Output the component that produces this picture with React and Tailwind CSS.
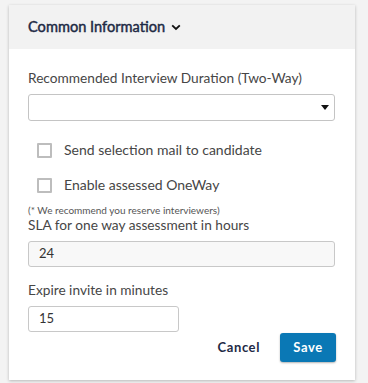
export default function App() {
  const font = { fontFamily: 'Lato, "Noto Sans", sans-serif' };
  return (
    <div className="min-h-[383px] w-[368px] bg-[#f3f3f3] pt-[5px] pl-[9px]" style={font}>
      <div className="flex h-[375px] w-[346px] flex-col bg-white shadow-[0_1px_3px_rgba(0,0,0,0.25)]">
        <div className="flex h-[44px] items-center gap-[6px] bg-[#f2f2f2] pb-[1px] pl-[19px]">
          <span className="text-[14.6px] font-normal text-[#1e2a45] [-webkit-text-stroke:0.45px_#1e2a45]">Common Information</span>
          <svg width="10" height="7" viewBox="0 0 10 7" className="mt-[1px]">
            <path d="M1.2 1.3 L5 5 L8.8 1.3" fill="none" stroke="#111" strokeWidth="1.8" />
          </svg>
        </div>
        <div className="flex flex-col px-[19px]">
          <div className="mt-[19px] text-[13.7px] leading-[20px] text-[#464646]">
            Recommended Interview Duration (Two-Way)
          </div>
          <div className="mt-[6px] flex h-[27px] w-[307px] items-center justify-end rounded-[3px] border border-[#c4c4c4] pr-[5px]">
            <svg width="8" height="5" viewBox="0 0 8 5">
              <path d="M0 0 H8 L4 5 Z" fill="#111" />
            </svg>
          </div>
          <label className="mt-[21px] flex items-center gap-[12px] pl-[9px]">
            <span className="h-[15px] w-[15px] rounded-[1px] border-2 border-[#bdbdbd]" />
            <span className="text-[14px] leading-[16px] text-[#464646]">Send selection mail to candidate</span>
          </label>
          <label className="mt-[19px] flex items-center gap-[12px] pl-[9px]">
            <span className="h-[15px] w-[15px] rounded-[1px] border-2 border-[#bdbdbd]" />
            <span className="text-[14px] leading-[16px] text-[#464646]">Enable assessed OneWay</span>
          </label>
          <div className="mt-[11px] text-[10px] leading-[12px] text-[#555]">(* We recommend you reserve interviewers)</div>
          <div className="mt-[0px] text-[13.7px] leading-[18px] text-[#464646]">SLA for one way assessment in hours</div>
          <div className="mt-[7px] flex h-[26px] w-[307px] items-center rounded-[3px] border border-[#c8c8c8] bg-[#f8f8f8] pl-[10px] text-[13px] text-[#333]">
            24
          </div>
          <div className="mt-[13px] text-[13.7px] leading-[20px] text-[#464646]">Expire invite in minutes</div>
          <div className="mt-[6px] flex h-[26px] w-[151px] items-center rounded-[3px] border border-[#c8c8c8] bg-white pl-[10px] text-[13px] text-[#333]">
            15
          </div>
          <div className="mt-[1px] flex items-center justify-end gap-[20px]">
            <span className="text-[13px] font-bold tracking-[0.6px] text-[#1e2a45]">Cancel</span>
            <span className="flex h-[29px] w-[56px] items-center justify-center rounded-[3px] bg-[#0a78b5] text-[13px] font-bold tracking-[0.6px] text-white shadow-[0_1px_2px_rgba(0,0,0,0.3)]">
              Save
            </span>
          </div>
        </div>
      </div>
    </div>
  );
}
